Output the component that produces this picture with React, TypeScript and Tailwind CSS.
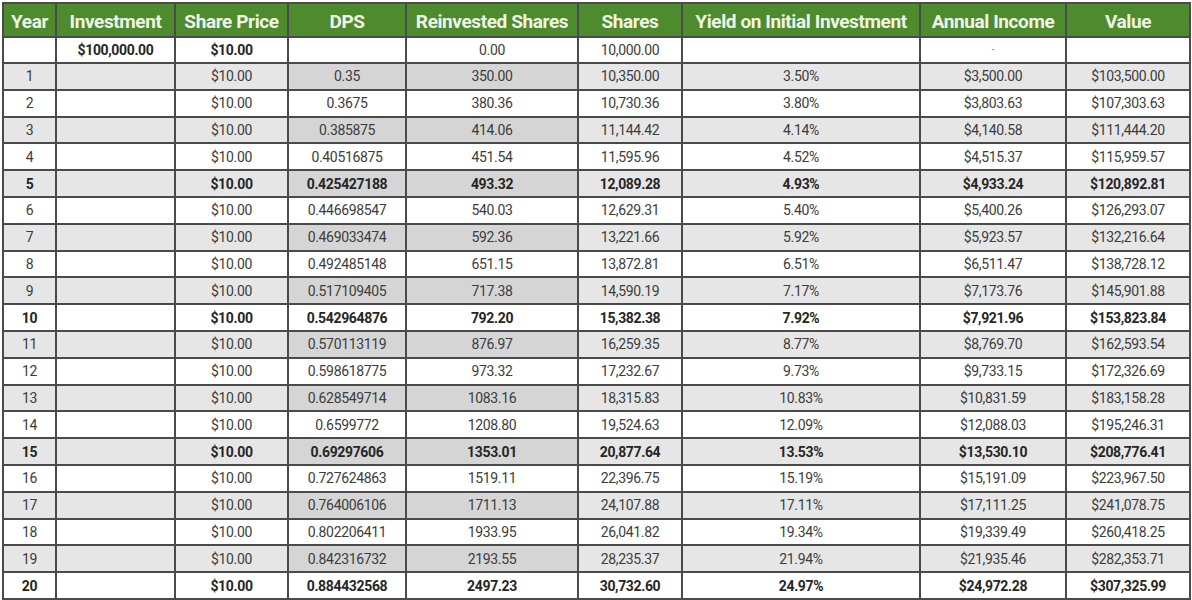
const headers = [
	"Year",
	"Investment",
	"Share Price",
	"DPS",
	"Reinvested Shares",
	"Shares",
	"Yield on Initial Investment",
	"Annual Income",
	"Value",
];

const widths = ["w-[53px]", "w-[119px]", "w-[113px]", "w-[118px]", "w-[172px]", "w-[104px]", "w-[238px]", "w-[146px]", "w-[124px]"];

// year, dps, reinvested, shares, yield, income, value
const rows: string[][] = [
	["1", "0.35", "350.00", "10,350.00", "3.50%", "$3,500.00", "$103,500.00"],
	["2", "0.3675", "380.36", "10,730.36", "3.80%", "$3,803.63", "$107,303.63"],
	["3", "0.385875", "414.06", "11,144.42", "4.14%", "$4,140.58", "$111,444.20"],
	["4", "0.40516875", "451.54", "11,595.96", "4.52%", "$4,515.37", "$115,959.57"],
	["5", "0.425427188", "493.32", "12,089.28", "4.93%", "$4,933.24", "$120,892.81"],
	["6", "0.446698547", "540.03", "12,629.31", "5.40%", "$5,400.26", "$126,293.07"],
	["7", "0.469033474", "592.36", "13,221.66", "5.92%", "$5,923.57", "$132,216.64"],
	["8", "0.492485148", "651.15", "13,872.81", "6.51%", "$6,511.47", "$138,728.12"],
	["9", "0.517109405", "717.38", "14,590.19", "7.17%", "$7,173.76", "$145,901.88"],
	["10", "0.542964876", "792.20", "15,382.38", "7.92%", "$7,921.96", "$153,823.84"],
	["11", "0.570113119", "876.97", "16,259.35", "8.77%", "$8,769.70", "$162,593.54"],
	["12", "0.598618775", "973.32", "17,232.67", "9.73%", "$9,733.15", "$172,326.69"],
	["13", "0.628549714", "1083.16", "18,315.83", "10.83%", "$10,831.59", "$183,158.28"],
	["14", "0.6599772", "1208.80", "19,524.63", "12.09%", "$12,088.03", "$195,246.31"],
	["15", "0.69297606", "1353.01", "20,877.64", "13.53%", "$13,530.10", "$208,776.41"],
	["16", "0.727624863", "1519.11", "22,396.75", "15.19%", "$15,191.09", "$223,967.50"],
	["17", "0.764006106", "1711.13", "24,107.88", "17.11%", "$17,111.25", "$241,078.75"],
	["18", "0.802206411", "1933.95", "26,041.82", "19.34%", "$19,339.49", "$260,418.25"],
	["19", "0.842316732", "2193.55", "28,235.37", "21.94%", "$21,935.46", "$282,353.71"],
	["20", "0.884432568", "2497.23", "30,732.60", "24.97%", "$24,972.28", "$307,325.99"],
];

const cell = "border-2 border-[#4a4a4a] text-center p-0 leading-none whitespace-nowrap";

export default function App() {
	return (
		<div className="w-[1192px] h-[600px] bg-white pl-[2px] pt-[2px] font-['Roboto',sans-serif] text-[#3c3c3c]">
			<table className="table-fixed border-collapse w-[1189px]">
				<colgroup>
					{widths.map((w, i) => (
						<col key={i} className={w} />
					))}
				</colgroup>
				<thead>
					<tr className="h-[34px] bg-[#4e8a2e] text-[#eef6e6]">
						{headers.map((h) => (
							<th key={h} className={`${cell} pt-[2px] text-[19px] font-bold tracking-[-0.4px]`}>
								{h}
							</th>
						))}
					</tr>
				</thead>
				<tbody className="text-[14px] tracking-[-0.35px]">
					<tr className="h-[26px] bg-white">
						<td className={cell}></td>
						<td className={`${cell} font-bold text-[#262626]`}>$100,000.00</td>
						<td className={`${cell} font-bold text-[#262626]`}>$10.00</td>
						<td className={cell}></td>
						<td className={cell}>0.00</td>
						<td className={cell}>10,000.00</td>
						<td className={cell}></td>
						<td className={`${cell} text-[10px] text-[#888]`}>-</td>
						<td className={cell}></td>
					</tr>
					{rows.map((r) => {
						const n = Number(r[0]);
						const odd = n % 2 === 1;
						const bold = n % 5 === 0;
						const light = odd ? "bg-[#e6e6e6]" : "bg-white";
						const dark = odd ? "bg-[#d5d5d5]" : "bg-white";
						return (
							<tr key={r[0]} className={`h-[26.8px] ${bold ? "font-bold text-[#262626]" : ""}`}>
								<td className={`${cell} ${light}`}>{r[0]}</td>
								<td className={`${cell} ${light}`}></td>
								<td className={`${cell} ${light}`}>$10.00</td>
								<td className={`${cell} ${dark}`}>{r[1]}</td>
								<td className={`${cell} ${dark}`}>{r[2]}</td>
								<td className={`${cell} ${light}`}>{r[3]}</td>
								<td className={`${cell} ${light}`}>{r[4]}</td>
								<td className={`${cell} ${light}`}>{r[5]}</td>
								<td className={`${cell} ${light}`}>{r[6]}</td>
							</tr>
						);
					})}
				</tbody>
			</table>
		</div>
	);
}
